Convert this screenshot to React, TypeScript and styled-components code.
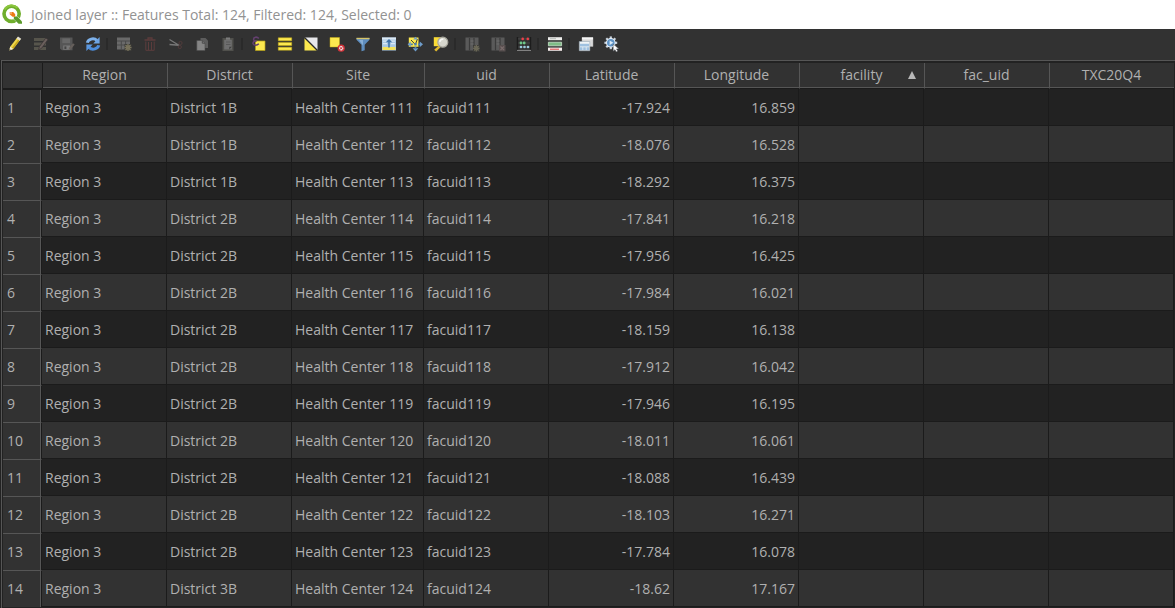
import React, { ReactNode } from "react";
import styled, { createGlobalStyle } from "styled-components";

const color = {
  panel: "#323232",
  rowDark: "#222222",
  grid: "#1b1b1b",
  line: "#565656",
  text: "#b0b0b0",
};

const GlobalStyle = createGlobalStyle`
  * { box-sizing: border-box; }
  body {
    margin: 0;
    background: ${color.rowDark};
    color: ${color.text};
    font: 14px/20px "Open Sans", "Noto Sans", sans-serif;
  }
`;

const Window = styled.main`
  display: flex;
  flex-direction: column;
  min-height: 100vh;
`;

const TitleBar = styled.header`
  display: flex;
  align-items: center;
  gap: 8px;
  height: 29px;
  padding: 0 2px;
  background: #ffffff;
  color: #929292;
`;

const Title = styled.h1`
  margin: 0;
  font: inherit;
  white-space: nowrap;
`;

const Toolbar = styled.div`
  display: flex;
  align-items: center;
  height: 31px;
  padding: 0 0 2px 2px;
  background: ${color.panel};
`;

const ToolButton = styled.button`
  display: flex;
  flex: none;
  align-items: center;
  justify-content: center;
  width: 26px;
  height: 26px;
  padding: 0;
  border: 0;
  background: none;
  &:enabled:hover { background: #444444; }
`;

const Separator = styled.span`
  flex: none;
  width: 5px;
  height: 12px;
  border-left: 2px solid #2a2a2a;
`;

const TableFrame = styled.section`
  flex: 1;
  margin-left: 1px;
  padding: 2px 1px 0 1px;
  border-top: 1px solid ${color.line};
  border-left: 1px solid ${color.line};
`;

const Table = styled.table`
  width: 100%;
  table-layout: fixed;
  border-collapse: separate;
  border-spacing: 0;
`;

const Column = styled.col<{ $width?: number }>`
  width: ${(p) => (p.$width ? `${p.$width}px` : "auto")};
`;

const Corner = styled.td`
  background: ${color.panel};
  border-bottom: 1px solid ${color.grid};
`;

const HeaderCell = styled.th`
  height: 26px;
  padding: 0 8px 2px 0;
  font-weight: 400;
  background: ${color.panel};
  border-left: 1px solid ${color.line};
  border-bottom: 1px solid ${color.grid};
  box-shadow: inset 0 -1px ${color.line};
  &:nth-child(2) { border-left-color: ${color.grid}; }
`;

const HeaderContent = styled.div`
  display: grid;
  grid-template-columns: 1fr auto 1fr;
  align-items: center;
  padding-left: 7px;
`;

const HeaderLabel = styled.span`
  grid-column: 2;
`;

const SortArrow = styled.svg`
  grid-column: 3;
  justify-self: end;
`;

const RowHeader = styled.th`
  padding: 0 4px;
  font-weight: 400;
  text-align: left;
  background: ${color.panel};
  border-top: 1px solid ${color.line};
  border-right: 1px solid ${color.grid};
  box-shadow: inset -1px 0 ${color.line};
`;

const Cell = styled.td<{ $numeric?: boolean }>`
  height: 37px;
  padding: 2px 3px 0;
  text-align: ${(p) => (p.$numeric ? "right" : "left")};
  white-space: nowrap;
  border-right: 1px solid ${color.grid};
  border-bottom: 1px solid ${color.grid};
`;

const Row = styled.tr`
  background: ${color.rowDark};
  &:nth-child(even) { background: ${color.panel}; }
  &:first-child ${RowHeader} { border-top-color: ${color.grid}; }
`;

const Logo = () => (
  <svg width="21" height="21" viewBox="0 0 21 21" aria-hidden="true">
    <circle cx="9.6" cy="9.8" r="7.6" fill="none" stroke="#6fae2c" strokeWidth="3.6" />
    <path d="M2.6 5.6A8.2 8.2 0 0 1 15.4 3.8" fill="none" stroke="#8cc63e" strokeWidth="2" />
    <path d="M11.2 12.4h4.4l5.2 5.4v3h-3.4l-6.2-6z" fill="#fff" />
    <path d="M11.8 12.6h3.4l4.8 4.9v2.2h-3.4l-4.8-4.7z" fill="#5b9a2b" />
    <path d="M7.8 8h3.4l2 2.2v2.6h-2.6l-2.8-2.4z" fill="#ee7913" />
    <path d="M7.8 8h2.2v2.2H7.8z" fill="#f5a35a" />
  </svg>
);

const gear = (cx: number, cy: number, r: number, fill: string, width = 1.4) => (
  <g>
    <circle cx={cx} cy={cy} r={r * 0.65} fill={fill} />
    <g stroke={fill} strokeWidth={width}>
      {[0, 45, 90, 135].map((a) => (
        <path key={a} d={`M${cx - r} ${cy}h${r * 2}`} transform={`rotate(${a} ${cx} ${cy})`} />
      ))}
    </g>
  </g>
);

const icons: Record<string, ReactNode> = {
  pencil: (
    <>
      <path d="M2.2 14.6l1-3.9L10.2 1.4l3.2 2.1-7.2 9.6z" fill="#f0d84a" />
      <path d="M4.8 12L12 2.6l1.4.9-7.2 9.6z" fill="#c9a91f" />
      <path d="M9.5 2.5l1.5-1.9 3.2 2.1-1.5 2z" fill="#e3e0d2" />
      <path d="M2.2 14.6l1-3.9 3 2.4z" fill="#f3ead0" />
      <path d="M2.2 14.6l.4-1.6 1 .9z" fill="#222" />
    </>
  ),
  multiEdit: (
    <>
      <path d="M1 2h12v3H1zM1 6.5h12v3H1zM1 11h12v3H1z" fill="#57554c" />
      <path d="M5.5 14l1-3.6L12.8 2l2.2 1.6-6.2 8.5z" fill="#6a5f5c" stroke="#3b3636" strokeWidth=".8" />
    </>
  ),
  save: (
    <>
      <path d="M1 1.5h12.5v12.8H3L1 12.5z" fill="#565656" />
      <path d="M3.3 2.5h7.8v4.6H3.3z" fill="#686868" />
      <path d="M4.2 9.5h6.8v4.3H4.2z" fill="#787878" />
      <path d="M5.4 10.4h2v2.6h-2z" fill="#444" />
      <path d="M10 11.8l4-4.6 1.7 1.3-3.8 4.7-2.2.5z" fill="#655f5b" />
    </>
  ),
  reload: (
    <>
      <path d="M2.3 6.8C3 3.4 8.6 1 12 4.6" fill="none" stroke="#7db1eb" strokeWidth="3" />
      <path d="M14.6 1v6.5H8.2z" fill="#6ca4e4" />
      <path d="M13.7 9.2c-.7 3.4-6.3 5.8-9.7 2.2" fill="none" stroke="#4d8dda" strokeWidth="3" />
      <path d="M1.4 15V8.5h6.4z" fill="#5b98e0" />
    </>
  ),
  addFeature: (
    <>
      <path d="M1 1.5h13v12H1z" fill="#6a6a6a" />
      <path d="M1 5h13M1 9h13M5.3 5v8.5M9.6 5v8.5" stroke="#4a4a4a" />
      <path d="M8.5 8h7v7h-7z" fill="#3a3a37" />
      {gear(12, 11.5, 3.5, "#78735c")}
    </>
  ),
  trash: (
    <g fill="none" stroke="#5c3c3c">
      <path d="M2.5 4h11M6 3.5V2h4v1.5" strokeWidth="1.3" />
      <path d="M3.8 5.5v8.8h8.4V5.5M6.5 6v8M9.5 6v8" />
    </g>
  ),
  cut: (
    <>
      <path d="M1.5 3.5l9.8 6M1.5 8.5l9.8.8" stroke="#777" strokeWidth="1.4" />
      <g fill="none" stroke="#503b3b">
        <circle cx="12.5" cy="7" r="1.6" />
        <circle cx="11.8" cy="11" r="1.6" />
      </g>
    </>
  ),
  copy: (
    <>
      <path d="M6.5 2h5l2.5 2.5V12H6.5z" fill="#5d5d5d" />
      <path d="M2.8 4.5h5.5L11 7.2v7.3H2.8z" fill="#858585" stroke="#4b4b4b" strokeWidth=".6" />
      <path d="M8.3 4.5v2.7H11" fill="none" stroke="#4b4b4b" />
    </>
  ),
  paste: (
    <>
      <path d="M2.5 2h11v13h-11z" fill="#50504c" />
      <path d="M4.2 3.7h7.6v9.8H4.2z" fill="#6e6e6e" />
      <path d="M6 1.5h4v2.2H6z" fill="#7c7c7c" />
      <path d="M6 6h4.5M6 8.5h4.5" stroke="#585858" />
      <path d="M9.3 10.7h2.5l-2.5 2.8z" fill="#3e3e3e" />
    </>
  ),
  expression: (
    <>
      <path d="M4.5 5H14v9.5H4.5z" fill="#fce94f" stroke="#b5a017" strokeWidth=".7" />
      <path d="M7.8 2.4C6 .3 2.5 1 2.6 3.2c0 1.2 1.3 1.8 3 1.7C3.3 4.9 1.7 6 2 7.6c.4 2 4 2.2 5.8.2" fill="none" stroke="#64406f" strokeWidth="1.5" />
    </>
  ),
  selectAll: (
    <g fill="#fce94f" stroke="#c4ab13" strokeWidth=".5">
      <path d="M1.3 1.8h13.4v3H1.3zM1.3 6.5h13.4v3H1.3zM1.3 11.2h13.4v3H1.3z" />
    </g>
  ),
  invert: (
    <>
      <path d="M1.5 1.5h13v13z" fill="#e8e8ea" />
      <path d="M1.5 2v12.5H14z" fill="#fce94f" />
      <path d="M1.5 1.5l13 13" stroke="#292929" strokeWidth="1.2" />
    </>
  ),
  deselect: (
    <>
      <path d="M1 1.5h9.5V11H1z" fill="#fce94f" stroke="#c4ab13" strokeWidth=".5" />
      <circle cx="12.2" cy="12.2" r="2.9" fill="#eee" stroke="#d33138" strokeWidth="1.4" />
      <path d="M10.2 14.2l4-4M10.8 11.4l2.8 2" stroke="#d33138" />
    </>
  ),
  filter: (
    <>
      <path d="M1.5 2h13v1.7L9.7 8.8v5.4l-3.2 1V8.8L1.5 3.7z" fill="#5e8dbe" />
      <path d="M1.5 1.8h13v1.4h-13z" fill="#d7c469" />
      <path d="M4 4h4v5.5z" fill="#88afd6" />
    </>
  ),
  moveTop: (
    <>
      <path d="M1 1.5h14v13H1z" fill="#a9c8e4" />
      <path d="M1 1.5h14v2H1z" fill="#dce9f4" />
      <path d="M2 5.2h4M10 5.2h4M2 7.6h4M10 7.6h4" stroke="#dce9f4" strokeWidth="1.2" />
      <path d="M1.5 11h13v3h-13z" fill="#f3e25b" />
      <path d="M7.2 11.5V6.2H4.8L8 3l3.2 3.2H8.8v5.3z" fill="#3f73a9" />
    </>
  ),
  pan: (
    <>
      <path d="M1.8 1.5h9.7v9.3H1.8z" fill="#fce94f" />
      <path d="M8.4 8.4l2-5.4M8 8.2L4 4" stroke="#3d4038" />
      <path d="M8.5 15.6l-2.9-3.3h5.8zM.6 8.3l3.2-2.9v5.8zM16 8.3l-3.3-2.9v5.8zM8.5.8l2.3 2.6H6.2z" fill="#6e9cc9" />
      <path d="M7.3 7.1h2.4v2.4H7.3zM3.8 7.4h2v1.8h-2zM11 7.4h2v1.8h-2zM7.6 10.8h1.8v2H7.6z" fill="#4b7fb0" />
    </>
  ),
  zoom: (
    <>
      <path d="M.8 1.2h8v9h-8z" fill="#fbdc35" />
      <path d="M5.6 9.7l1.8 1.6-4.2 4.2-2-1.7z" fill="#e1b92d" />
      <circle cx="9.8" cy="6.2" r="5" fill="#d7d7ce" stroke="#a7a69c" strokeWidth="1.2" />
      <path d="M6.8 5.8c.3-1.8 1.8-2.8 3.5-2.6" fill="none" stroke="#f8f8f5" strokeWidth="1.5" />
    </>
  ),
  newField: (
    <>
      <path d="M1.5 1.5h13v13h-13z" fill="#5a5a5a" />
      <path d="M5.5 2v12.5M10 2v12.5" stroke="#3b3b3b" strokeWidth="1.2" />
      <path d="M6.5 5h3M6.5 8h3" stroke="#6c6c6c" />
      <path d="M9 9h7v7H9z" fill="#393937" />
      {gear(12.3, 12.3, 3.2, "#6b6857")}
    </>
  ),
  deleteField: (
    <>
      <path d="M1.5 1.5h13v13h-13z" fill="#5a5a5a" />
      <path d="M5.5 2v12.5M10 2v12.5" stroke="#3b3b3b" strokeWidth="1.2" />
      <path d="M6.5 5h3M6.5 8h3" stroke="#6c6c6c" />
      <path d="M9 9h6.5v6.5H9z" fill="#574f4f" />
      <path d="M10.5 10.5l3.5 3.5M14 10.5L10.5 14" stroke="#7a6c6c" strokeWidth="1.2" />
    </>
  ),
  calculator: (
    <>
      <path d="M1.5 1v13.5M14.5 1v13.5" stroke="#1c1c1c" strokeWidth="1.4" />
      <path d="M2 2.9h12M2 7h12M2 11h12" stroke="#555" strokeWidth=".7" />
      <path d="M1 14.4h14" stroke="#8b8b8b" />
      <g fill="#ee4049"><circle cx="6.7" cy="2.9" r="1.3" /><circle cx="11.8" cy="2.9" r="1.3" /></g>
      <g fill="#6fc98a"><circle cx="5" cy="7" r="1.4" /><circle cx="8.2" cy="7" r="1.4" /></g>
      <g fill="#9ccbdd"><circle cx="5" cy="11" r="1.3" /><circle cx="8.5" cy="11" r="1.3" /><circle cx="12" cy="11" r="1.3" /></g>
    </>
  ),
  formatting: (
    <>
      <path d="M1 1.2h14v3H1z" fill="#eeeeec" />
      <path d="M1.4 6.2h13.2v3.6H1.4z" fill="#7fbd87" stroke="#c9e2cb" strokeWidth=".8" />
      <path d="M1 11.6h14v3.2H1z" fill="#f6eded" />
      <path d="M3 2.7h6" stroke="#b5bab5" />
      <path d="M3 13.2h9" stroke="#dc4545" />
    </>
  ),
  dock: (
    <>
      <path d="M4 1.5h11v9H4z" fill="#d8d8d8" stroke="#a9a9a9" strokeWidth=".5" />
      <path d="M4 1.5h11v2H4z" fill="#f6f6f6" />
      <path d="M1.3 5.5h10.5v9.2H1.3z" fill="#f0f4f7" stroke="#9babb9" strokeWidth=".6" />
      <path d="M2 7.8h9v2.6H2zM2 11.2h2.5v2.8H2zM5.2 11.2h2.6v2.8H5.2zM8.5 11.2H11v2.8H8.5z" fill="#9fc1e0" />
    </>
  ),
  actions: (
    <>
      {gear(6.8, 6.8, 6.4, "#c9d3dd", 2.2)}
      <circle cx="6.8" cy="6.8" r="4.8" fill="#e9eff5" />
      <circle cx="6.8" cy="6.8" r="3.8" fill="#5e93c6" />
      <path d="M5.6 4.6v4.4L9.4 6.8z" fill="#dcebf7" />
      <path d="M9.2 8.2v7l1.8-1.5 1.2 2.3 1.6-.9-1.3-2.2 2.4-.2z" fill="#fff" stroke="#44494e" strokeWidth=".5" />
    </>
  ),
};

type Tool = { icon: string; label: string; disabled?: boolean };

const toolGroups: Tool[][] = [
  [
    { icon: "pencil", label: "Toggle editing mode" },
    { icon: "multiEdit", label: "Toggle multi edit mode", disabled: true },
    { icon: "save", label: "Save edits", disabled: true },
    { icon: "reload", label: "Reload the table" },
  ],
  [
    { icon: "addFeature", label: "Add feature", disabled: true },
    { icon: "trash", label: "Delete selected features", disabled: true },
    { icon: "cut", label: "Cut selected rows", disabled: true },
    { icon: "copy", label: "Copy selected rows", disabled: true },
    { icon: "paste", label: "Paste features", disabled: true },
  ],
  [
    { icon: "expression", label: "Select features using an expression" },
    { icon: "selectAll", label: "Select all" },
    { icon: "invert", label: "Invert selection" },
    { icon: "deselect", label: "Deselect all" },
    { icon: "filter", label: "Filter features using form" },
    { icon: "moveTop", label: "Move selection to top" },
    { icon: "pan", label: "Pan map to the selected rows" },
    { icon: "zoom", label: "Zoom map to the selected rows" },
  ],
  [
    { icon: "newField", label: "New field", disabled: true },
    { icon: "deleteField", label: "Delete field", disabled: true },
    { icon: "calculator", label: "Open field calculator" },
  ],
  [{ icon: "formatting", label: "Conditional formatting" }],
  [
    { icon: "dock", label: "Dock attribute table" },
    { icon: "actions", label: "Actions" },
  ],
];

const columns = [
  { name: "Region", width: 125 },
  { name: "District", width: 125 },
  { name: "Site", width: 132 },
  { name: "uid", width: 125 },
  { name: "Latitude", width: 125 },
  { name: "Longitude", width: 125 },
  { name: "facility", width: 125, sorted: true },
  { name: "fac_uid", width: 125 },
  { name: "TXC20Q4" },
];

const features = [
  { id: 111, district: "1B", lat: "-17.924", lon: "16.859" },
  { id: 112, district: "1B", lat: "-18.076", lon: "16.528" },
  { id: 113, district: "1B", lat: "-18.292", lon: "16.375" },
  { id: 114, district: "2B", lat: "-17.841", lon: "16.218" },
  { id: 115, district: "2B", lat: "-17.956", lon: "16.425" },
  { id: 116, district: "2B", lat: "-17.984", lon: "16.021" },
  { id: 117, district: "2B", lat: "-18.159", lon: "16.138" },
  { id: 118, district: "2B", lat: "-17.912", lon: "16.042" },
  { id: 119, district: "2B", lat: "-17.946", lon: "16.195" },
  { id: 120, district: "2B", lat: "-18.011", lon: "16.061" },
  { id: 121, district: "2B", lat: "-18.088", lon: "16.439" },
  { id: 122, district: "2B", lat: "-18.103", lon: "16.271" },
  { id: 123, district: "2B", lat: "-17.784", lon: "16.078" },
  { id: 124, district: "3B", lat: "-18.62", lon: "17.167" },
];

export default function App() {
  return (
    <Window>
      <GlobalStyle />
      <TitleBar>
        <Logo />
        <Title>Joined layer :: Features Total: 124, Filtered: 124, Selected: 0</Title>
      </TitleBar>
      <Toolbar role="toolbar" aria-label="Attribute table">
        {toolGroups.map((group, i) => (
          <React.Fragment key={i}>
            {i > 0 && <Separator />}
            {group.map((tool) => (
              <ToolButton key={tool.icon} type="button" aria-label={tool.label} disabled={tool.disabled}>
                <svg width="16" height="16" viewBox="0 0 16 16" aria-hidden="true">
                  {icons[tool.icon]}
                </svg>
              </ToolButton>
            ))}
          </React.Fragment>
        ))}
      </Toolbar>
      <TableFrame>
        <Table>
          <colgroup>
            <Column $width={39} />
            {columns.map((c) => (
              <Column key={c.name} $width={c.width} />
            ))}
          </colgroup>
          <thead>
            <tr>
              <Corner />
              {columns.map((c) => (
                <HeaderCell key={c.name} scope="col" aria-sort={c.sorted ? "ascending" : undefined}>
                  <HeaderContent>
                    <HeaderLabel>{c.name}</HeaderLabel>
                    {c.sorted && (
                      <SortArrow width="8" height="8" viewBox="0 0 8 8" aria-hidden="true">
                        <path d="M4 0l4 8H0z" fill="#b8b8b8" />
                      </SortArrow>
                    )}
                  </HeaderContent>
                </HeaderCell>
              ))}
            </tr>
          </thead>
          <tbody>
            {features.map((f, i) => (
              <Row key={f.id}>
                <RowHeader scope="row">{i + 1}</RowHeader>
                <Cell>Region 3</Cell>
                <Cell>District {f.district}</Cell>
                <Cell>Health Center {f.id}</Cell>
                <Cell>facuid{f.id}</Cell>
                <Cell $numeric>{f.lat}</Cell>
                <Cell $numeric>{f.lon}</Cell>
                <Cell />
                <Cell />
                <Cell />
              </Row>
            ))}
          </tbody>
        </Table>
      </TableFrame>
    </Window>
  );
}
